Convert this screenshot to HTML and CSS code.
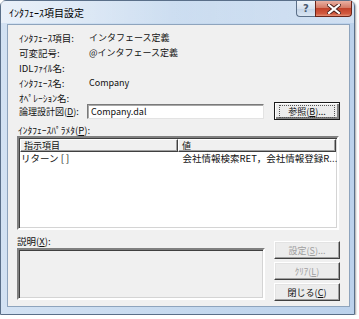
FILE: index.html
```html
<!DOCTYPE html>
<html lang="ja">
<head>
<meta charset="utf-8">
<link rel="stylesheet" href="styles.css">
</head>
<body>
<div class="window">
  <div class="titlebar">
    <span class="title">ｲﾝﾀﾌｪｰｽ項目設定</span>
    <div class="controls">
      <div class="ctl help">?</div>
      <div class="ctl close">
        <svg width="14" height="10" viewBox="0 0 14 10"><path d="M2 1 L12 9 M12 1 L2 9" stroke="#4a1f1a" stroke-width="4" stroke-linecap="square"/><path d="M2 1 L12 9 M12 1 L2 9" stroke="#fff" stroke-width="2.2" stroke-linecap="square"/></svg>
      </div>
    </div>
  </div>
  <div class="client">
    <div class="info">
      <span class="lbl">ｲﾝﾀﾌｪｰｽ項目:</span><span class="val">インタフェース定義</span>
      <span class="lbl">可変記号:</span><span class="val">@インタフェース定義</span>
      <span class="lbl">IDLﾌｧｲﾙ名:</span><span class="val"></span>
      <span class="lbl">ｲﾝﾀﾌｪｰｽ名:</span><span class="val">Company</span>
      <span class="lbl">ｵﾍﾟﾚｰｼｮﾝ名:</span><span class="val"></span>
    </div>
    <div class="logic">
      <span class="lbl wide">論理設計図(<u>D</u>):</span>
      <div class="input">Company.dal</div>
      <div class="btn default"><span class="focus">参照(<u>B</u>)...</span></div>
    </div>
    <div class="section-label">ｲﾝﾀﾌｪｰｽﾊﾟﾗﾒﾀ(<u>P</u>):</div>
    <div class="list">
      <div class="list-head">
        <div class="col c1">指示項目</div>
        <div class="col c2">値</div>
      </div>
      <div class="list-row">
        <div class="cell c1">リターン [ ]</div>
        <div class="cell c2">会社情報検索RET，会社情報登録R...</div>
      </div>
    </div>
    <div class="bottom">
      <div class="desc">
        <div class="section-label">説明(<u>X</u>):</div>
        <div class="desc-box"></div>
      </div>
      <div class="buttons">
        <div class="btn disabled">設定(<u>S</u>)...</div>
        <div class="btn disabled">ｸﾘｱ(<u>L</u>)</div>
        <div class="btn">閉じる(<u>C</u>)</div>
      </div>
    </div>
  </div>
</div>
</body>
</html>
```
FILE: styles.css
```css
html, body {
  margin: 0;
  padding: 0;
  background: #ffffff;
}
body {
  font-family: "Noto Sans CJK JP", "Liberation Sans", sans-serif;
  font-size: 9px;
  color: #111;
}
.window {
  width: 355px;
  height: 315px;
  box-sizing: border-box;
  border: 1px solid #5a6f89;
  border-radius: 6px 6px 0 0;
  background: linear-gradient(90deg, #d3e2f3 0%, #c4d8ee 60%, #bcd2ec 100%);
  display: flex;
  flex-direction: column;
  padding: 0 4px 7px 6px;
  box-shadow: 1px 1px 2px rgba(0,0,0,0.35);
}
.titlebar {
  height: 22px;
  display: flex;
  justify-content: space-between;
  align-items: flex-start;
  background: linear-gradient(90deg, rgba(255,255,255,0.5), rgba(255,255,255,0.1) 50%, rgba(255,255,255,0.3));
  margin: 0 -4px 0 -6px;
  padding: 0 2px 0 8px;
}
.title {
  font-size: 10px;
  line-height: 24px;
  color: #000;
}
.controls {
  display: flex;
}
.ctl {
  height: 16px;
  box-sizing: border-box;
  border: 1px solid #5b6f88;
  border-top: none;
  display: flex;
  align-items: center;
  justify-content: center;
}
.help {
  width: 19px;
  border-radius: 0 0 0 4px;
  border-right: none;
  background: linear-gradient(#eef3f9, #d6e1ee 50%, #c3d3e6 51%, #d9e5f2);
  color: #4a5a70;
  font-family: "DejaVu Sans", sans-serif;
  font-weight: bold;
  font-size: 10px;
}
.close {
  width: 37px;
  border-color: #6b2418;
  border-radius: 0 0 4px 0;
  background: linear-gradient(#eab1a3, #d47a66 45%, #c2432b 50%, #d25a3f 85%, #e3937a);
}
.client {
  flex: 1;
  background: #f0f0f0;
  border: 1px solid #8ea4bd;
  margin-top: 1px;
  padding: 5px 0 0 9px;
  display: flex;
  flex-direction: column;
}
.info {
  display: grid;
  grid-template-columns: 70px 1fr;
  grid-auto-rows: 15px;
  align-items: center;
  padding-left: 2px;
}
.lbl {
  white-space: nowrap;
  font-size: 9.5px;
}
.val {
  white-space: nowrap;
}
.logic {
  display: flex;
  align-items: center;
  margin-top: -3px;
  height: 18px;
  padding-left: 2px;
}
.wide {
  width: 68px;
  font-size: 9px;
}
.input {
  width: 177px;
  height: 15px;
  box-sizing: border-box;
  background: #fff;
  border: 1px solid;
  border-color: #7a7a7a #e3e3e3 #e3e3e3 #7a7a7a;
  box-shadow: inset 1px 1px 0 #a8a8a8;
  padding-left: 3px;
  line-height: 13px;
}
.btn {
  width: 66px;
  height: 18px;
  box-sizing: border-box;
  border: 1px solid;
  border-color: #ffffff #404040 #404040 #ffffff;
  box-shadow: inset -1px -1px 0 #a0a0a0, inset 1px 1px 0 #e3e3e3;
  background: #ececec;
  display: flex;
  align-items: center;
  justify-content: center;
}
.logic .btn {
  margin-left: 10px;
}
.btn.default {
  border: 1px solid #1a1a1a;
  box-shadow: inset 1px 1px 0 #fff, inset -2px -2px 0 #808080;
}
.focus {
  border: 1px dotted #555;
  padding: 0 8px;
  line-height: 11px;
}
.btn.disabled {
  color: #a0a0a0;
}
.section-label {
  height: 12px;
  line-height: 12px;
  white-space: nowrap;
  font-size: 9.5px;
}
.client > .section-label {
  margin-top: 4px;
  padding-left: 1px;
}
.list {
  width: 322px;
  height: 94px;
  box-sizing: border-box;
  background: #fff;
  border: 2px solid;
  border-color: #808080 #ffffff #ffffff #808080;
  box-shadow: inset 1px 1px 0 #404040, inset -1px -1px 0 #d4d4d4;
  padding: 1px 0 0 1px;
}
.list-head {
  display: flex;
  height: 13px;
}
.col {
  box-sizing: border-box;
  height: 13px;
  background: #f0f0f0;
  border: 1px solid;
  border-color: #fff #404040 #404040 #fff;
  box-shadow: inset -1px -1px 0 #a0a0a0;
  line-height: 11px;
  padding-left: 3px;
  font-size: 9px;
}
.c1 {
  width: 158px;
}
.c2 {
  width: 158px;
}
.list-row {
  display: flex;
  height: 12px;
  line-height: 12px;
}
.cell {
  white-space: nowrap;
  overflow: hidden;
  padding-left: 1px;
  font-size: 9.5px;
}
.cell.c2 {
  padding-left: 7px;
}
.bottom {
  display: flex;
  align-items: flex-end;
  margin-top: 5px;
}
.desc {
  display: flex;
  flex-direction: column;
  width: 248px;
}
.desc .section-label {
  margin-bottom: 1px;
}
.desc-box {
  height: 52px;
  box-sizing: border-box;
  border: 2px solid;
  border-color: #808080 #ffffff #ffffff #808080;
  box-shadow: inset 1px 1px 0 #404040, inset -1px -1px 0 #d4d4d4;
  background: #f0f0f0;
}
.buttons {
  display: flex;
  flex-direction: column;
  gap: 3px;
  margin-left: 9px;
  margin-bottom: -1px;
}
u {
  text-decoration: underline;
  text-underline-offset: 1px;
}
```
